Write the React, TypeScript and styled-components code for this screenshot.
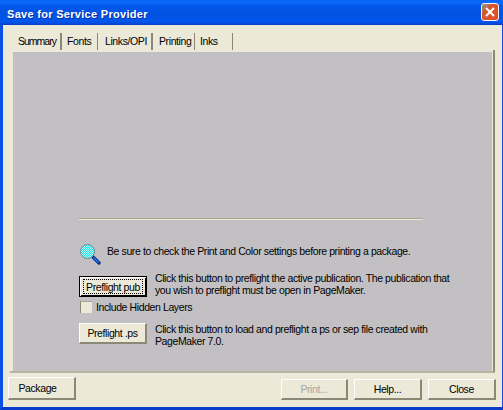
import { createGlobalStyle, styled } from "styled-components"

const GlobalStyle = createGlobalStyle`
    html, body {
        margin: 0;
        padding: 0;
        background: #0a3fd0;
    }
    * {
        box-sizing: border-box;
    }
`

const Window = styled.div`
    width: 503px;
    height: 410px;
    display: flex;
    flex-direction: column;
    font-family: "Liberation Sans", sans-serif;
    font-size: 10.5px;
    letter-spacing: -0.4px;
    color: #000;
    background: #ece9d8;
    border-left: 3px solid #0a50e6;
    border-right: 1px solid #0a50e6;
    border-bottom: 3px solid #0a3ccc;
`

const TitleBar = styled.div`
    height: 25px;
    margin: 0 -1px 0 -3px;
    padding: 0 4px 1px 7px;
    flex: none;
    display: flex;
    align-items: center;
    justify-content: space-between;
    background: linear-gradient(
        #0a62f0 0,
        #0a6cff 2px,
        #0458ea 6px,
        #0252e2 14px,
        #0456ec 21px,
        #0349d8 24px,
        #0339c0 25px
    );
`

const Title = styled.span`
    margin-top: 4px;
    font-size: 11px;
    font-weight: 700;
    letter-spacing: 0.3px;
    color: #fff;
    text-shadow: 1px 1px 0 #0a2fa0;
`

const CloseBox = styled.div`
    width: 18px;
    height: 18px;
    border: 1px solid #f4f4f4;
    border-radius: 3px;
    background: linear-gradient(135deg, #a08070 0, #a08070 20%, #d9542a 30%, #e0502a 100%);
    display: flex;
    align-items: center;
    justify-content: center;
`

const TabRow = styled.div`
    height: 17px;
    margin: 8px 0 0 4px;
    flex: none;
    display: flex;
`

const Tab = styled.div<{ $width: number; $pad: number; $heavy?: boolean; $tracking?: number }>`
    width: ${(p) => p.$width}px;
    height: 17px;
    padding-left: ${(p) => p.$pad}px;
    line-height: 16px;
    white-space: nowrap;
    letter-spacing: ${(p) => p.$tracking ?? -0.4}px;
    border-right: ${(p) => (p.$heavy ? "2px solid #8c8878" : "1px solid #8c8878")};
`

const Page = styled.div`
    width: 485px;
    height: 323px;
    margin: 0 0 0 7px;
    padding: 2px 0 0 3px;
    flex: none;
    display: flex;
    border-right: 2px solid #8c8878;
    border-bottom: 2px solid #b8b4a4;
`

const Panel = styled.div`
    width: 479px;
    height: 319px;
    padding: 166px 0 0 66px;
    background: #c3c0c3;
    display: flex;
    flex-direction: column;
    align-items: flex-start;
`

const Rule = styled.div`
    width: 344px;
    height: 2px;
    background: linear-gradient(#a8a698 50%, #ecead8 50%);
`

const NoteRow = styled.div`
    margin-top: 23px;
    height: 23px;
    display: flex;
    align-items: flex-start;
    gap: 6px;
`

const NoteText = styled.span`
    margin-top: 1px;
    line-height: 14px;
`

const ActionRow = styled.div<{ $top: number }>`
    margin-top: ${(p) => p.$top}px;
    display: flex;
    gap: 8px;
`

const ActionText = styled.div<{ $lift: number }>`
    width: 302px;
    line-height: 12px;
    margin-top: ${(p) => -p.$lift}px;
`

const Button = styled.div<{
    $width?: number
    $height?: number
    $inset?: number
    $focused?: boolean
    $disabled?: boolean
}>`
    width: ${(p) => p.$width ?? 68}px;
    height: ${(p) => p.$height ?? 21}px;
    padding-right: ${(p) => p.$inset ?? 0}px;
    flex: none;
    display: flex;
    align-items: center;
    justify-content: center;
    white-space: nowrap;
    background: #ece9d8;
    color: ${(p) => (p.$disabled ? "#a8a698" : "#000")};
    border-top: 1px solid #fff;
    border-left: 1px solid #fff;
    border-right: 2px solid #8c8878;
    border-bottom: 2px solid #8c8878;
    ${(p) => p.$focused && "border: 1px solid #000; box-shadow: inset 1px 1px 0 #fff, inset -1px -1px 0 #000;"}
`

const FocusRing = styled.span`
    width: 60px;
    height: 15px;
    display: flex;
    align-items: center;
    justify-content: center;
    border: 1px dotted #000;
`

const CheckRow = styled.div`
    margin-top: 4px;
    height: 12px;
    display: flex;
    align-items: center;
    gap: 4px;
`

const CheckBox = styled.div`
    width: 12px;
    height: 12px;
    margin-left: 1px;
    background: #ece9d8;
    border-top: 1px solid #a8a698;
    border-left: 1px solid #8c8878;
`

const Footer = styled.div`
    height: 23px;
    margin-top: 4px;
    padding: 0 6px 0 5px;
    flex: none;
    display: flex;
    align-items: flex-end;
    gap: 6px;
`

const FooterGap = styled.div`
    flex: 1;
`

const MagnifierIcon = () => (
    <svg width="22" height="23" viewBox="0 0 22 23">
        <defs>
            <pattern id="dither" width="2" height="2" patternUnits="userSpaceOnUse">
                <rect width="2" height="2" fill="#22e0e0" />
                <rect width="1" height="1" fill="#c0fcfc" />
                <rect x="1" y="1" width="1" height="1" fill="#c0fcfc" />
            </pattern>
        </defs>
        <path d="M14 14 L20 20" stroke="#08308c" strokeWidth="3.4" strokeLinecap="round" />
        <path d="M14.5 14.5 L19.5 19.5" stroke="#1a80f0" strokeWidth="1.4" />
        <circle cx="8.5" cy="8.5" r="7" fill="url(#dither)" stroke="#6a8c94" strokeWidth="1" />
    </svg>
)

const App = () => {
    return (
        <Window>
            <GlobalStyle />
            <TitleBar>
                <Title>Save for Service Provider</Title>
                <CloseBox>
                    <svg width="12" height="12" viewBox="0 0 12 12">
                        <path d="M2 2 L10 10 M10 2 L2 10" stroke="#fff" strokeWidth="2" />
                    </svg>
                </CloseBox>
            </TitleBar>
            <TabRow>
                <Tab $width={55} $pad={11} $heavy $tracking={-1}>Summary</Tab>
                <Tab $width={36} $pad={5}>Fonts</Tab>
                <Tab $width={55} $pad={7} $heavy>Links/OPI</Tab>
                <Tab $width={42} $pad={6}>Printing</Tab>
                <Tab $width={38} $pad={5}>Inks</Tab>
            </TabRow>
            <Page>
                <Panel>
                    <Rule />
                    <NoteRow>
                        <MagnifierIcon />
                        <NoteText>Be sure to check the Print and Color settings before printing a package.</NoteText>
                    </NoteRow>
                    <ActionRow $top={10}>
                        <Button $focused>
                            <FocusRing>Preflight pub</FocusRing>
                        </Button>
                        <ActionText $lift={4}>
                            Click this button to preflight the active publication. The publication that you wish to preflight must be open in PageMaker.
                        </ActionText>
                    </ActionRow>
                    <CheckRow>
                        <CheckBox />
                        Include Hidden Layers
                    </CheckRow>
                    <ActionRow $top={10}>
                        <Button>Preflight .ps</Button>
                        <ActionText $lift={0}>
                            Click this button to load and preflight a ps or sep file created with PageMaker 7.0.
                        </ActionText>
                    </ActionRow>
                </Panel>
            </Page>
            <Footer>
                <Button $height={23} $inset={8}>Package</Button>
                <FooterGap />
                <Button $width={67} $disabled>Print...</Button>
                <Button>Help...</Button>
                <Button>Close</Button>
            </Footer>
        </Window>
    )
}

export default App
